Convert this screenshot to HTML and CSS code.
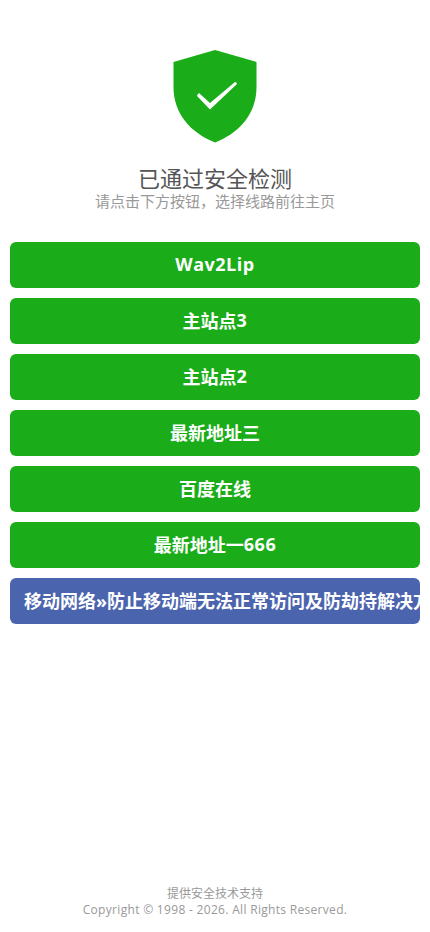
FILE: index.html
```html
<!DOCTYPE html>
<html lang="zh-CN">
<head>
<meta charset="utf-8">
<title>已通过安全检测</title>
<link rel="stylesheet" href="styles.css">
</head>
<body>
<main class="page">
  <header class="head">
    <svg class="shield" viewBox="0 0 84 93" width="84" height="93" aria-hidden="true">
      <path class="shield-body" d="M42 0 L83.500 12 L83.500 37 C83.500 64 66 83 42 92.500 C18 83 0.500 64 0.500 37 L0.500 12 Z"/>
      <path class="shield-tick" d="M24 46 Q24 45 26 43 L37 53 L62 32 Q63.500 32 64 34 L37 59.500 Z"/>
    </svg>
    <h1 class="title">已通过安全检测</h1>
    <p class="sub">请点击下方按钮，选择线路前往主页</p>
  </header>
  <nav class="links">
    <a class="btn" href="#"><span class="lat">Wav2Lip</span></a>
    <a class="btn" href="#">主站点<span class="lat">3</span></a>
    <a class="btn" href="#">主站点<span class="lat">2</span></a>
    <a class="btn" href="#">最新地址三</a>
    <a class="btn" href="#">百度在线</a>
    <a class="btn" href="#">最新地址一<span class="lat">666</span></a>
    <a class="btn btn-blue" href="#"><span class="btn-long">移动网络»防止移动端无法正常访问及防劫持解决方案</span></a>
  </nav>
  <footer class="foot">
    <p class="foot-line">提供安全技术支持</p>
    <p class="foot-line foot-copy">Copyright © 1998 - 2026. All Rights Reserved.</p>
  </footer>
</main>
</body>
</html>
```
FILE: styles.css
```css
* { box-sizing: border-box; }
html, body { margin: 0; padding: 0; background: #fff; }
body { font-family: "Open Sans", "Noto Sans CJK SC", sans-serif; }
.page { height: 932px; display: flex; flex-direction: column; padding: 50px 10px 14px; overflow: hidden; }
.head { display: flex; flex-direction: column; align-items: center; }
.shield { display: block; }
.shield-body { fill: #1aad19; }
.shield-tick { fill: #fff; }
.title { margin: 20px 0 0; font-size: 22px; line-height: 30px; font-weight: 400; color: #555; }
.sub { margin: -1px 0 0; font-size: 15px; line-height: 18px; color: #999; }
.links { display: flex; flex-direction: column; gap: 10px; margin-top: 32px; }
.btn { display: flex; align-items: center; justify-content: center; height: 46px; padding-bottom: 2px; border-radius: 6px; background: #1aad19; color: #fff; font-size: 18px; font-weight: 700; text-decoration: none; overflow: hidden; white-space: nowrap; }
.lat { letter-spacing: 0.5px; }
.btn-blue { background: #4b64ae; justify-content: flex-start; padding-left: 14px; }
.btn-long { flex: none; }
.foot { margin-top: auto; text-align: center; color: #999; font-size: 12px; line-height: 16px; }
.foot-line { margin: 0; }
.foot-copy { letter-spacing: 0.31px; }
```
